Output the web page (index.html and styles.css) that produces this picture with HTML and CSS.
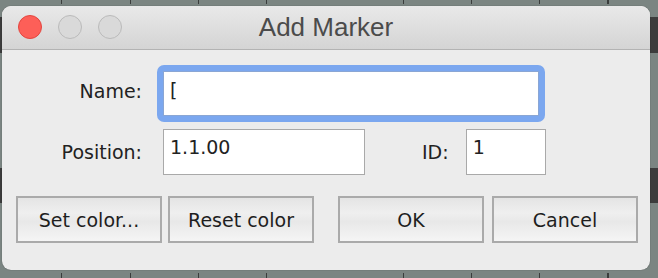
FILE: index.html
```html
<!DOCTYPE html>
<html lang="en">
<head>
    <meta charset="UTF-8">
    <meta name="viewport" content="width=device-width, initial-scale=1.0">
    <title>Add Marker</title>
    <link rel="stylesheet" href="styles.css">
</head>
<body>
    <div class="window">
        <div class="titlebar">
            <div class="lights">
                <span class="light light-close"></span>
                <span class="light"></span>
                <span class="light"></span>
            </div>
            <div class="title">Add Marker</div>
            <div></div>
        </div>

        <div class="content">
            <div class="row">
                <label class="label" for="markerName">Name:</label>
                <span class="focus-ring">
                    <input type="text" id="markerName" class="field field-name" value="[">
                </span>
            </div>

            <div class="row row-pos">
                <label class="label" for="markerPos">Position:</label>
                <input type="text" id="markerPos" class="field field-pos" value="1.1.00">
                <label class="label-id" for="markerId">ID:</label>
                <input type="text" id="markerId" class="field field-id" value="1">
            </div>

            <div class="buttons">
                <div class="group">
                    <button class="btn">Set color...</button>
                    <button class="btn">Reset color</button>
                </div>
                <div class="group group-right">
                    <button class="btn">OK</button>
                    <button class="btn">Cancel</button>
                </div>
            </div>
        </div>
    </div>
</body>
</html>
```

FILE: styles.css
```css
body {
    margin: 0;
    height: 278px;
    overflow: hidden;
    font-family: "DejaVu Sans", sans-serif;
    color: #222;
    background-color: #7b8582;
    background-image:
        repeating-linear-gradient(90deg, transparent 0 61.5px, rgba(30, 30, 30, 0.7) 61.5px 62.5px, transparent 62.5px 68.25px),
        repeating-linear-gradient(90deg, transparent 0 61.5px, rgba(30, 30, 30, 0.7) 61.5px 62.5px, transparent 62.5px 68.25px),
        linear-gradient(to bottom, transparent 0 17px, #3c3c3c 17px 53px, transparent 53px 168px, #3c3c3c 168px 203px, transparent 203px);
    background-size: 100% 4px, 100% 5px, 100% 100%;
    background-position: top, bottom, 0 0;
    background-repeat: no-repeat;
}

.window {
    width: 648px;
    height: 264px;
    margin: 6px 0 0 2px;
    border-radius: 9px;
    background: #ececec;
    box-shadow: 0 0 1px rgba(0, 0, 0, 0.5);
    display: flex;
    flex-direction: column;
    overflow: hidden;
}

/* title bar */
.titlebar {
    height: 43px;
    flex: none;
    display: grid;
    grid-template-columns: 1fr auto 1fr;
    align-items: center;
    background: linear-gradient(to bottom, #e9e9e9, #d4d4d4);
    border-bottom: 1px solid #b3b3b3;
}

.lights {
    display: flex;
    gap: 16px;
    padding-left: 16px;
    padding-bottom: 1px;
}

.light {
    width: 22px;
    height: 22px;
    border-radius: 50%;
    background: #d9d9d9;
    border: 1px solid #bababa;
}

.light-close {
    background: #fd5f58;
    border-color: #e2463f;
}

.title {
    font-family: "Liberation Sans", Arial, sans-serif;
    font-size: 26px;
    color: #4b4b4b;
}

/* form */
.content {
    flex: 1;
    padding-top: 15px;
    font-size: 19px;
}

.row {
    display: flex;
    align-items: center;
}

.label {
    width: 140px;
    text-align: right;
}

.row:first-child .label {
    padding-bottom: 5px;
}

.focus-ring {
    display: block;
    margin-left: 15px;
    padding: 6px;
    background: #7ba7ef;
    border-radius: 7px;
}

.field {
    display: block;
    box-sizing: border-box;
    margin: 0;
    padding: 5px 6px 15px;
    border: 1px solid #a9a9a9;
    background: #fff;
    font-family: "DejaVu Sans", sans-serif;
    font-size: 19px;
    color: #222;
    outline: none;
}

.field-name {
    width: 376px;
    height: 45px;
    border-color: #8aa6d4;
    padding-top: 6px;
    padding-bottom: 14px;
}

.row-pos {
    margin-top: 7px;
}

.field-pos {
    width: 202px;
    height: 46px;
    margin-left: 21px;
}

.label-id {
    margin-left: 57px;
    margin-right: 17px;
}

.field-id {
    width: 80px;
    height: 46px;
}

/* buttons */
.buttons {
    display: flex;
    gap: 24px;
    margin-top: 21px;
    padding-left: 14px;
}

.group {
    display: flex;
    gap: 6px;
}

.group-right {
    gap: 8px;
}

.btn {
    width: 146px;
    height: 47px;
    margin: 0;
    padding: 0;
    border: 2px solid #aaaaaa;
    border-radius: 0;
    background: linear-gradient(to bottom, #e4e4e4 0%, #efefef 35%, #e8e8e8 55%, #f5f5f5 100%);
    font-family: "DejaVu Sans", sans-serif;
    font-size: 19px;
    color: #1e1e1e;
    cursor: pointer;
}
```
